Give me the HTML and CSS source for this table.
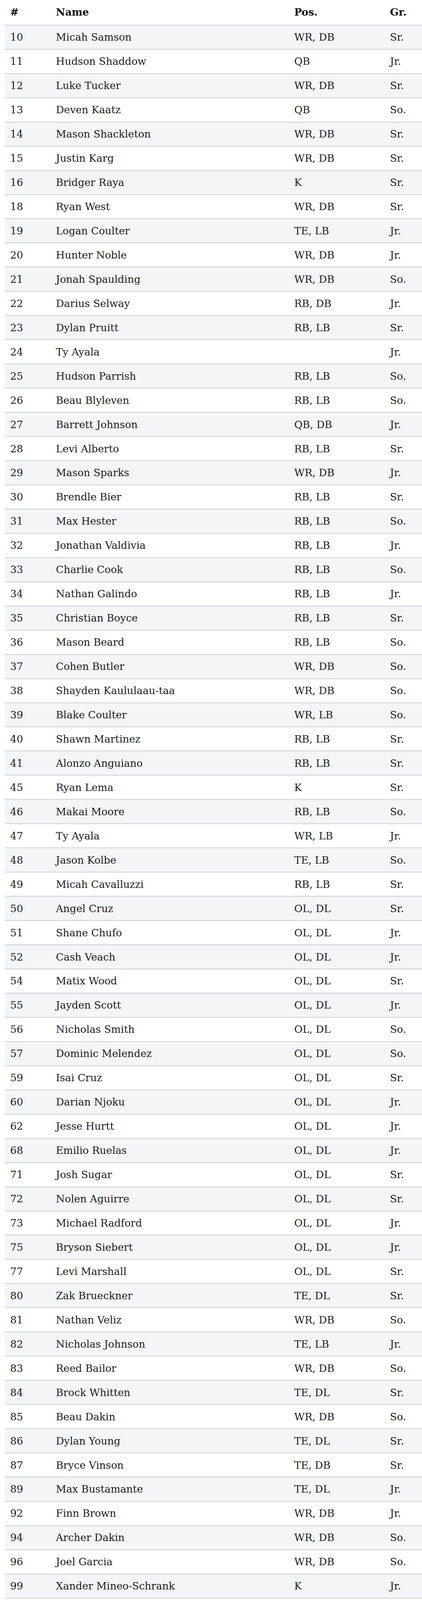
FILE: index.html
```html
<!DOCTYPE html>
<html lang="en">
<head>
<meta charset="utf-8">
<title>Roster</title>
<link rel="stylesheet" href="styles.css">
</head>
<body>
<div class="roster" role="table">
  <div class="row head" role="row"><div class="cell" role="columnheader">#</div><div class="cell" role="columnheader">Name</div><div class="cell" role="columnheader">Pos.</div><div class="cell" role="columnheader">Gr.</div></div>
  <div class="body" role="rowgroup">
    <div class="row" role="row"><div class="cell">10</div><div class="cell">Micah Samson</div><div class="cell">WR, DB</div><div class="cell">Sr.</div></div>
    <div class="row" role="row"><div class="cell">11</div><div class="cell">Hudson Shaddow</div><div class="cell">QB</div><div class="cell">Jr.</div></div>
    <div class="row" role="row"><div class="cell">12</div><div class="cell">Luke Tucker</div><div class="cell">WR, DB</div><div class="cell">Sr.</div></div>
    <div class="row" role="row"><div class="cell">13</div><div class="cell">Deven Kaatz</div><div class="cell">QB</div><div class="cell">So.</div></div>
    <div class="row" role="row"><div class="cell">14</div><div class="cell">Mason Shackleton</div><div class="cell">WR, DB</div><div class="cell">Sr.</div></div>
    <div class="row" role="row"><div class="cell">15</div><div class="cell">Justin Karg</div><div class="cell">WR, DB</div><div class="cell">Sr.</div></div>
    <div class="row" role="row"><div class="cell">16</div><div class="cell">Bridger Raya</div><div class="cell">K</div><div class="cell">Sr.</div></div>
    <div class="row" role="row"><div class="cell">18</div><div class="cell">Ryan West</div><div class="cell">WR, DB</div><div class="cell">Sr.</div></div>
    <div class="row" role="row"><div class="cell">19</div><div class="cell">Logan Coulter</div><div class="cell">TE, LB</div><div class="cell">Jr.</div></div>
    <div class="row" role="row"><div class="cell">20</div><div class="cell">Hunter Noble</div><div class="cell">WR, DB</div><div class="cell">Jr.</div></div>
    <div class="row" role="row"><div class="cell">21</div><div class="cell">Jonah Spaulding</div><div class="cell">WR, DB</div><div class="cell">So.</div></div>
    <div class="row" role="row"><div class="cell">22</div><div class="cell">Darius Selway</div><div class="cell">RB, DB</div><div class="cell">Jr.</div></div>
    <div class="row" role="row"><div class="cell">23</div><div class="cell">Dylan Pruitt</div><div class="cell">RB, LB</div><div class="cell">Sr.</div></div>
    <div class="row" role="row"><div class="cell">24</div><div class="cell">Ty Ayala</div><div class="cell"></div><div class="cell">Jr.</div></div>
    <div class="row" role="row"><div class="cell">25</div><div class="cell">Hudson Parrish</div><div class="cell">RB, LB</div><div class="cell">So.</div></div>
    <div class="row" role="row"><div class="cell">26</div><div class="cell">Beau Blyleven</div><div class="cell">RB, LB</div><div class="cell">So.</div></div>
    <div class="row" role="row"><div class="cell">27</div><div class="cell">Barrett Johnson</div><div class="cell">QB, DB</div><div class="cell">Jr.</div></div>
    <div class="row" role="row"><div class="cell">28</div><div class="cell">Levi Alberto</div><div class="cell">RB, LB</div><div class="cell">Sr.</div></div>
    <div class="row" role="row"><div class="cell">29</div><div class="cell">Mason Sparks</div><div class="cell">WR, DB</div><div class="cell">Jr.</div></div>
    <div class="row" role="row"><div class="cell">30</div><div class="cell">Brendle Bier</div><div class="cell">RB, LB</div><div class="cell">Sr.</div></div>
    <div class="row" role="row"><div class="cell">31</div><div class="cell">Max Hester</div><div class="cell">RB, LB</div><div class="cell">So.</div></div>
    <div class="row" role="row"><div class="cell">32</div><div class="cell">Jonathan Valdivia</div><div class="cell">RB, LB</div><div class="cell">Jr.</div></div>
    <div class="row" role="row"><div class="cell">33</div><div class="cell">Charlie Cook</div><div class="cell">RB, LB</div><div class="cell">So.</div></div>
    <div class="row" role="row"><div class="cell">34</div><div class="cell">Nathan Galindo</div><div class="cell">RB, LB</div><div class="cell">Jr.</div></div>
    <div class="row" role="row"><div class="cell">35</div><div class="cell">Christian Boyce</div><div class="cell">RB, LB</div><div class="cell">Sr.</div></div>
    <div class="row" role="row"><div class="cell">36</div><div class="cell">Mason Beard</div><div class="cell">RB, LB</div><div class="cell">So.</div></div>
    <div class="row" role="row"><div class="cell">37</div><div class="cell">Cohen Butler</div><div class="cell">WR, DB</div><div class="cell">So.</div></div>
    <div class="row" role="row"><div class="cell">38</div><div class="cell">Shayden Kaululaau-taa</div><div class="cell">WR, DB</div><div class="cell">So.</div></div>
    <div class="row" role="row"><div class="cell">39</div><div class="cell">Blake Coulter</div><div class="cell">WR, LB</div><div class="cell">So.</div></div>
    <div class="row" role="row"><div class="cell">40</div><div class="cell">Shawn Martinez</div><div class="cell">RB, LB</div><div class="cell">Sr.</div></div>
    <div class="row" role="row"><div class="cell">41</div><div class="cell">Alonzo Anguiano</div><div class="cell">RB, LB</div><div class="cell">Sr.</div></div>
    <div class="row" role="row"><div class="cell">45</div><div class="cell">Ryan Lema</div><div class="cell">K</div><div class="cell">Sr.</div></div>
    <div class="row" role="row"><div class="cell">46</div><div class="cell">Makai Moore</div><div class="cell">RB, LB</div><div class="cell">So.</div></div>
    <div class="row" role="row"><div class="cell">47</div><div class="cell">Ty Ayala</div><div class="cell">WR, LB</div><div class="cell">Jr.</div></div>
    <div class="row" role="row"><div class="cell">48</div><div class="cell">Jason Kolbe</div><div class="cell">TE, LB</div><div class="cell">So.</div></div>
    <div class="row" role="row"><div class="cell">49</div><div class="cell">Micah Cavalluzzi</div><div class="cell">RB, LB</div><div class="cell">Sr.</div></div>
    <div class="row" role="row"><div class="cell">50</div><div class="cell">Angel Cruz</div><div class="cell">OL, DL</div><div class="cell">Sr.</div></div>
    <div class="row" role="row"><div class="cell">51</div><div class="cell">Shane Chufo</div><div class="cell">OL, DL</div><div class="cell">Jr.</div></div>
    <div class="row" role="row"><div class="cell">52</div><div class="cell">Cash Veach</div><div class="cell">OL, DL</div><div class="cell">Jr.</div></div>
    <div class="row" role="row"><div class="cell">54</div><div class="cell">Matix Wood</div><div class="cell">OL, DL</div><div class="cell">Sr.</div></div>
    <div class="row" role="row"><div class="cell">55</div><div class="cell">Jayden Scott</div><div class="cell">OL, DL</div><div class="cell">Jr.</div></div>
    <div class="row" role="row"><div class="cell">56</div><div class="cell">Nicholas Smith</div><div class="cell">OL, DL</div><div class="cell">So.</div></div>
    <div class="row" role="row"><div class="cell">57</div><div class="cell">Dominic Melendez</div><div class="cell">OL, DL</div><div class="cell">So.</div></div>
    <div class="row" role="row"><div class="cell">59</div><div class="cell">Isai Cruz</div><div class="cell">OL, DL</div><div class="cell">Sr.</div></div>
    <div class="row" role="row"><div class="cell">60</div><div class="cell">Darian Njoku</div><div class="cell">OL, DL</div><div class="cell">Jr.</div></div>
    <div class="row" role="row"><div class="cell">62</div><div class="cell">Jesse Hurtt</div><div class="cell">OL, DL</div><div class="cell">Jr.</div></div>
    <div class="row" role="row"><div class="cell">68</div><div class="cell">Emilio Ruelas</div><div class="cell">OL, DL</div><div class="cell">Jr.</div></div>
    <div class="row" role="row"><div class="cell">71</div><div class="cell">Josh Sugar</div><div class="cell">OL, DL</div><div class="cell">Sr.</div></div>
    <div class="row" role="row"><div class="cell">72</div><div class="cell">Nolen Aguirre</div><div class="cell">OL, DL</div><div class="cell">Sr.</div></div>
    <div class="row" role="row"><div class="cell">73</div><div class="cell">Michael Radford</div><div class="cell">OL, DL</div><div class="cell">Jr.</div></div>
    <div class="row" role="row"><div class="cell">75</div><div class="cell">Bryson Siebert</div><div class="cell">OL, DL</div><div class="cell">Jr.</div></div>
    <div class="row" role="row"><div class="cell">77</div><div class="cell">Levi Marshall</div><div class="cell">OL, DL</div><div class="cell">Sr.</div></div>
    <div class="row" role="row"><div class="cell">80</div><div class="cell">Zak Brueckner</div><div class="cell">TE, DL</div><div class="cell">Sr.</div></div>
    <div class="row" role="row"><div class="cell">81</div><div class="cell">Nathan Veliz</div><div class="cell">WR, DB</div><div class="cell">So.</div></div>
    <div class="row" role="row"><div class="cell">82</div><div class="cell">Nicholas Johnson</div><div class="cell">TE, LB</div><div class="cell">Jr.</div></div>
    <div class="row" role="row"><div class="cell">83</div><div class="cell">Reed Bailor</div><div class="cell">WR, DB</div><div class="cell">So.</div></div>
    <div class="row" role="row"><div class="cell">84</div><div class="cell">Brock Whitten</div><div class="cell">TE, DL</div><div class="cell">Sr.</div></div>
    <div class="row" role="row"><div class="cell">85</div><div class="cell">Beau Dakin</div><div class="cell">WR, DB</div><div class="cell">So.</div></div>
    <div class="row" role="row"><div class="cell">86</div><div class="cell">Dylan Young</div><div class="cell">TE, DL</div><div class="cell">Sr.</div></div>
    <div class="row" role="row"><div class="cell">87</div><div class="cell">Bryce Vinson</div><div class="cell">TE, DB</div><div class="cell">Sr.</div></div>
    <div class="row" role="row"><div class="cell">89</div><div class="cell">Max Bustamante</div><div class="cell">TE, DL</div><div class="cell">Jr.</div></div>
    <div class="row" role="row"><div class="cell">92</div><div class="cell">Finn Brown</div><div class="cell">WR, DB</div><div class="cell">Jr.</div></div>
    <div class="row" role="row"><div class="cell">94</div><div class="cell">Archer Dakin</div><div class="cell">WR, DB</div><div class="cell">So.</div></div>
    <div class="row" role="row"><div class="cell">96</div><div class="cell">Joel Garcia</div><div class="cell">WR, DB</div><div class="cell">So.</div></div>
    <div class="row" role="row"><div class="cell">99</div><div class="cell">Xander Mineo-Schrank</div><div class="cell">K</div><div class="cell">Jr.</div></div>
  </div>
</div>
</body>
</html>
```

FILE: styles.css
```css
html, body {
  margin: 0;
  padding: 0;
  background: #ffffff;
}

body {
  padding-left: 12px;
  font-family: "DejaVu Serif", "Liberation Serif", serif;
  font-size: 26px;
  line-height: 30px;
  color: #1c1c1c;
}

.roster {
  width: 1068px;
  display: flex;
  flex-direction: column;
}

/* Rows are sized so the full roster fits within the 4096px-tall frame */
.row {
  display: grid;
  grid-template-columns: 117px 610px 245px 1fr;
  align-items: center;
  box-sizing: border-box;
  height: 61.96px;
  border-bottom: 3px solid #dcdde0;
  background: #ffffff;
}

.row.head {
  height: 65.84px;
  font-weight: bold;
  color: #111111;
}

.body {
  display: flex;
  flex-direction: column;
}

.body .row:nth-child(odd) {
  background: #f4f5f7;
}

.cell {
  padding-left: 14px;
  white-space: nowrap;
}
```
